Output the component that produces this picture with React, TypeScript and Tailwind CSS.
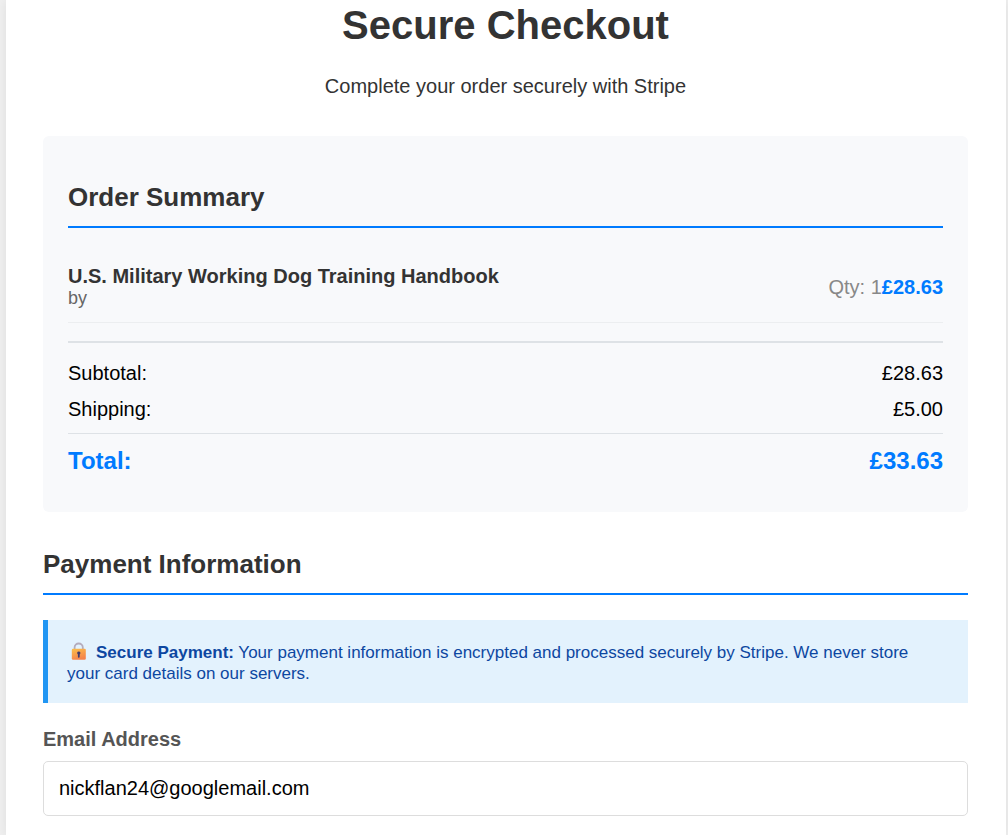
import { useState } from "react";

const money = (n: number) => `£${n.toFixed(2)}`;

const item = { title: "U.S. Military Working Dog Training Handbook", author: "", qty: 1, price: 28.63 };
const shipping = 5;

function SectionTitle({ children }: { children: string }) {
  return (
    <h2 className="border-b-2 border-[#007bff] pb-3.5 text-[26px] leading-[30px] font-bold text-[#333]">
      {children}
    </h2>
  );
}

function LockIcon() {
  return (
    <svg viewBox="0 0 24 20" className="-mt-1.5 mr-[5px] inline-block h-5 w-6 align-middle" aria-hidden="true">
      <defs>
        <linearGradient id="lock-body" x1="0" y1="0" x2="0.4" y2="1">
          <stop offset="0" stopColor="#fcc04a" />
          <stop offset="1" stopColor="#f5844c" />
        </linearGradient>
      </defs>
      <path d="M7.6 9V6.6a4.1 4.1 0 0 1 8.2 0V9" fill="none" stroke="#b4acbc" strokeWidth="1.8" />
      <rect x="4.8" y="7.8" width="14" height="11" rx="1.2" fill="url(#lock-body)" />
      <path d="M11.8 10.4a1.7 1.7 0 0 1 .9 3.1v2.3a.9.9 0 0 1-1.8 0v-2.3a1.7 1.7 0 0 1 .9-3.1z" fill="#433b6b" />
    </svg>
  );
}

function SummaryRow({ label, value }: { label: string; value: string }) {
  return (
    <div className="flex justify-between text-xl leading-[22px] text-black">
      <span>{label}</span>
      <span>{value}</span>
    </div>
  );
}

export default function App() {
  const [email, setEmail] = useState("nickflan24@googlemail.com");

  return (
    <div className="min-h-screen bg-[#f0f0f0] pr-0.5 pl-1.5 font-['Liberation_Sans',Arial,sans-serif]">
      <main className="min-h-screen bg-white pt-0.5 pr-[38px] pl-[37px] shadow-[0_0_12px_rgba(0,0,0,0.08)]">
        <header className="text-center text-[#333]">
          <h1 className="text-[40px] leading-[46px] font-bold">Secure Checkout</h1>
          <p className="mt-[27px] text-xl leading-[22px]">Complete your order securely with Stripe</p>
        </header>

        <section className="mt-[39px] rounded-md bg-[#f8f9fb] px-[25px] pt-[46px] pb-[38px]">
          <SectionTitle>Order Summary</SectionTitle>

          <div className="mt-[19px] flex items-center justify-between border-b border-[#eceef0] pt-[18px] pb-[13px]">
            <div>
              <h3 className="text-xl leading-[22px] font-bold text-[#333]">{item.title}</h3>
              <p className="text-lg leading-[22px] text-[#666]">by {item.author}</p>
            </div>
            <div className="text-xl leading-[22px]">
              <span className="text-[#888]">Qty: {item.qty}</span>
              <span className="font-bold text-[#007bff]">{money(item.price)}</span>
            </div>
          </div>

          <div className="mt-[18px] border-t-2 border-[#dee2e6] pt-[19px]">
            <div className="flex flex-col gap-3.5">
              <SummaryRow label="Subtotal:" value={money(item.price)} />
              <SummaryRow label="Shipping:" value={money(shipping)} />
            </div>
            <div className="mt-[13px] flex justify-between border-t border-[#dee2e6] pt-[13px] text-2xl leading-[27px] font-bold text-[#007bff]">
              <span>Total:</span>
              <span>{money(item.price + shipping)}</span>
            </div>
          </div>
        </section>

        <section className="pt-[37px] pb-5">
          <SectionTitle>Payment Information</SectionTitle>

          <div className="mt-[25px] border-l-[5px] border-[#2196f3] bg-[#e3f2fd] pt-[22px] pr-8 pb-[19px] pl-[19px] text-[17px] leading-[21px] text-[#0d47a1]">
            <LockIcon />
            <strong>Secure Payment:</strong> Your payment information is encrypted and processed securely by Stripe. We
            never store your card details on our servers.
          </div>

          <label htmlFor="email" className="mt-[25px] block text-xl leading-[22px] font-bold text-[#555]">
            Email Address
          </label>
          <input
            id="email"
            type="email"
            value={email}
            onChange={(e) => setEmail(e.target.value)}
            className="mt-[11px] block h-[55px] w-full rounded-[5px] border border-[#ddd] bg-white px-[15px] text-xl text-black"
          />
        </section>
      </main>
    </div>
  );
}
